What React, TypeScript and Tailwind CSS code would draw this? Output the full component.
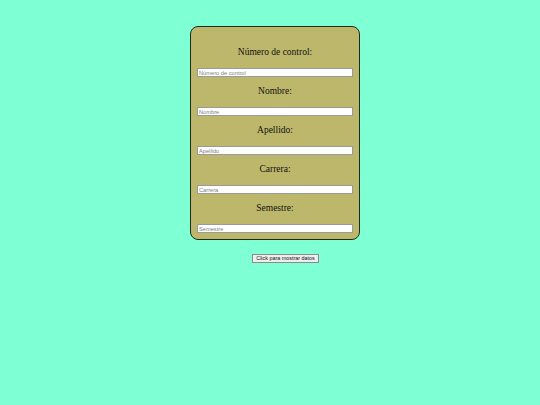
export default function App() {
  const fields = [
    { label: "Número de control:", ph: "Número de control" },
    { label: "Nombre:", ph: "Nombre" },
    { label: "Apellido:", ph: "Apellido" },
    { label: "Carrera:", ph: "Carrera" },
    { label: "Semestre:", ph: "Semestre" },
  ];

  return (
    <div className="min-h-[405px] w-full bg-[#7fffd4] pt-[26px]">
      <div className="ml-[190px] w-[170px] rounded-[8px] border-[1.5px] border-[#1f2a1f] bg-[#bdb76b] px-[6px] pt-[19px] pb-[6px]">
        {fields.map((f, i) => (
          <div key={f.label} className={i > 0 ? "mt-[8px]" : ""}>
            <p className="h-[12px] text-center font-['Liberation_Serif',serif] text-[9.5px] leading-[12px] text-[#111]">
              {f.label}
            </p>
            <input
              type="text"
              placeholder={f.ph}
              className="mt-[10px] block h-[9px] w-full border border-[#9a9a9a] bg-white px-[1px] font-['Liberation_Sans',sans-serif] text-[5.7px] leading-[7px] outline-none placeholder:text-[#808080]"
            />
          </div>
        ))}
      </div>
      <div className="mt-[14px] flex">
        <button className="ml-[252px] h-[9px] w-[67px] whitespace-nowrap border border-[#8a8a8a] bg-[#efefef] p-0 text-center font-['Liberation_Sans',sans-serif] text-[5.4px] leading-[7px] text-[#111]">
          Click para mostrar datos
        </button>
      </div>
    </div>
  );
}
